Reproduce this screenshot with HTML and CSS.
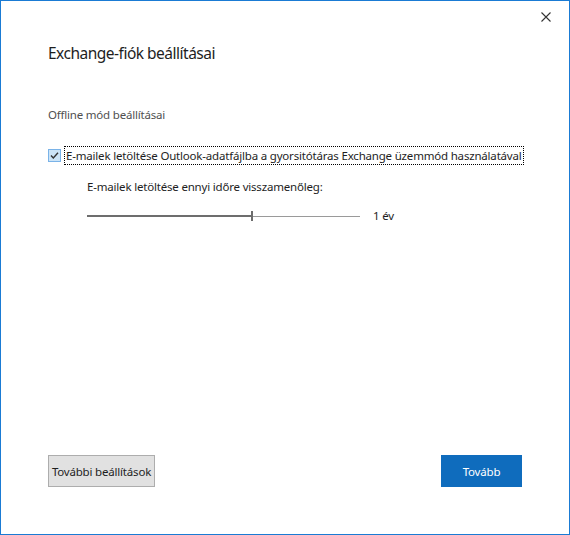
FILE: index.html
```html
<!DOCTYPE html>
<html lang="hu">
<head>
<meta charset="utf-8">
<title>Exchange-fiók beállításai</title>
<link rel="stylesheet" href="styles.css">
</head>
<body>
<div class="dialog">
  <div class="titlebar">
    <button class="close" aria-label="Bezárás">
      <svg width="10" height="10" viewBox="0 0 10 10"><path d="M0.5 0.5L9.5 9.5M9.5 0.5L0.5 9.5" stroke="#333" stroke-width="1.1" fill="none"/></svg>
    </button>
  </div>
  <div class="content">
    <h1 class="title">Exchange-fiók beállításai</h1>
    <div class="section">Offline mód beállításai</div>
    <label class="check-row">
      <span class="checkbox">
        <svg width="13" height="13" viewBox="0 0 13 13"><rect x="0.5" y="0.5" width="12" height="12" fill="#cce4f7" stroke="#7ab3e8"/><path d="M3 6.6L5.3 9L10 3.8" stroke="#333" stroke-width="1.4" fill="none"/></svg>
      </span>
      <span class="check-label">E-mailek letöltése Outlook-adatfájlba a gyorsitótáras Exchange üzemmód használatával</span>
    </label>
    <div class="sub">
      <div class="sub-label">E-mailek letöltése ennyi időre visszamenőleg:</div>
      <div class="slider-row">
        <div class="slider">
          <div class="fill"></div>
          <div class="thumb"></div>
          <div class="rest"></div>
        </div>
        <span class="value">1 év</span>
      </div>
    </div>
  </div>
  <div class="footer">
    <button class="btn">További beállítások</button>
    <button class="btn primary">Tovább</button>
  </div>
</div>
</body>
</html>
```

FILE: styles.css
```css
* { box-sizing: border-box; }
html, body { margin: 0; padding: 0; background: #fff; }
body {
  font-family: "Noto Sans", "Open Sans", sans-serif;
  color: #1e1e1e;
}
.dialog {
  width: 570px;
  height: 535px;
  border: 1px solid #1a7bd4;
  display: flex;
  flex-direction: column;
  background: #fff;
}
.titlebar {
  display: flex;
  justify-content: flex-end;
  height: 33px;
  padding: 10px 17px 0 0;
}
.close {
  border: 0;
  background: transparent;
  padding: 0;
  width: 12px;
  height: 12px;
  display: flex;
  align-items: center;
  justify-content: center;
}
.content {
  flex: 1;
  padding: 0 0 0 47px;
}
.title {
  margin: 8px 0 0 0;
  font-size: 15.5px;
  font-weight: 400;
  line-height: 22px;
  letter-spacing: -0.5px;
  color: #1e1e1e;
}
.section {
  margin-top: 43px;
  font-size: 11.5px;
  line-height: 16px;
  letter-spacing: -0.2px;
  color: #505050;
}
.check-row {
  margin-top: 24px;
  display: flex;
  align-items: center;
  gap: 4px;
}
.checkbox { display: flex; width: 13px; height: 13px; }
.check-label {
  font-size: 11.5px;
  line-height: 17px;
  letter-spacing: -0.19px;
  padding: 0 1px;
  outline: 1px dotted #000;
  outline-offset: 0;
  color: #1e1e1e;
}
.sub {
  padding-left: 39px;
}
.sub-label {
  margin-top: 15px;
  font-size: 11.5px;
  line-height: 16px;
  letter-spacing: -0.19px;
  color: #1e1e1e;
}
.slider-row {
  margin-top: 13px;
  display: flex;
  align-items: center;
  gap: 13px;
}
.slider {
  width: 273px;
  height: 10px;
  display: flex;
  align-items: center;
}
.fill { width: 164px; height: 2px; background: #6d6d6d; }
.thumb { width: 2px; height: 10px; background: #6d6d6d; }
.rest { flex: 1; height: 1px; background: #9a9a9a; }
.value { font-size: 11.5px; line-height: 16px; letter-spacing: -0.19px; color: #1e1e1e; }
.footer {
  display: flex;
  justify-content: space-between;
  padding: 0 47px 47px 47px;
}
.btn {
  font-family: "Noto Sans", "Open Sans", sans-serif;
  font-size: 11.5px;
  letter-spacing: -0.19px;
  height: 32px;
  width: 107px;
  padding: 0;
  background: #e1e1e1;
  border: 1px solid #adadad;
  color: #1e1e1e;
}
.primary {
  width: 81px;
  background: #0f6cbd;
  border-color: #0f6cbd;
  color: #fff;
}
```
